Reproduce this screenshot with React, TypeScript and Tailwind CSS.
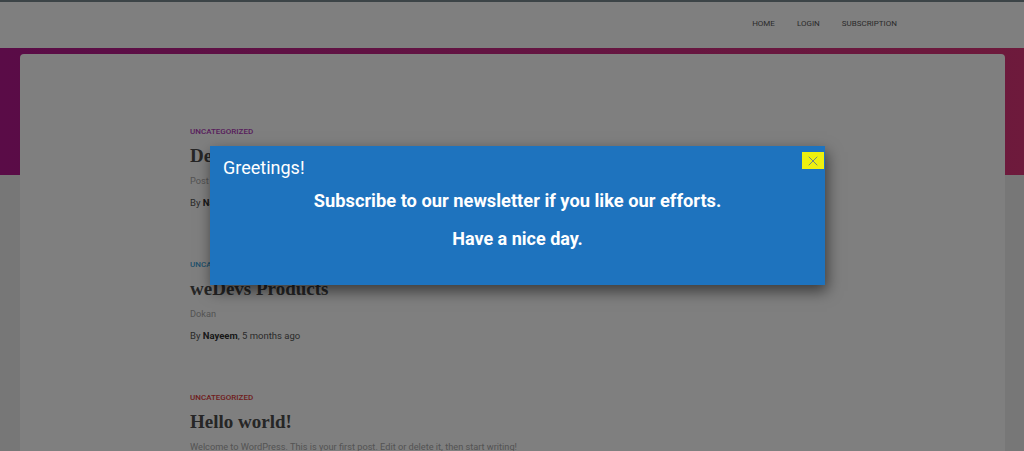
import { X } from "lucide-react";

const posts = [
  {
    cat: "Uncategorized",
    catColor: "text-[#b03cb8]",
    title: "Demo Subscription",
    excerpt: "Post content for demo",
    author: "Nayeem",
    when: "5 months ago",
  },
  {
    cat: "Uncategorized",
    catColor: "text-[#3ea2d8]",
    title: "weDevs Products",
    excerpt: "Dokan",
    author: "Nayeem",
    when: "5 months ago",
  },
  {
    cat: "Uncategorized",
    catColor: "text-[#e03c3c]",
    title: "Hello world!",
    excerpt:
      "Welcome to WordPress. This is your first post. Edit or delete it, then start writing!",
    author: "admin",
    when: "5 months ago",
  },
];

function App() {
  return (
    <div className="relative h-[451px] overflow-hidden bg-[#eeeeee] font-['Roboto',sans-serif]">
      {/* 헤더 */}
      <header className="h-[48px] bg-white border-t-[2px] border-[#78888f] flex items-center justify-end pr-[127px]">
        <nav className="flex gap-[22px] text-[8px] uppercase text-[#555555] -mt-[2px]">
          <span>Home</span>
          <span>Login</span>
          <span>Subscription</span>
        </nav>
      </header>

      {/* 그라데이션 배너 + 카드 */}
      <div className="h-[127px] bg-gradient-to-r from-[#b4188e] to-[#dc3478]" />
      <main className="-mt-[121px] mx-[20px] mr-[19px] bg-white rounded-[4px] h-[400px] pt-[73px] pl-[170px]">
        <div className="flex flex-col gap-[51px]">
          {posts.map((p) => (
            <article key={p.title} className="flex flex-col">
              <span className={`text-[8px] font-medium uppercase leading-[10px] ${p.catColor}`}>
                {p.cat}
              </span>
              <h2 className="mt-[8px] font-['Liberation_Serif',serif] font-bold text-[19px] leading-[22px] text-[#4c4c4c]">
                {p.title}
              </h2>
              <p className="mt-[8px] text-[9.2px] leading-[12px] text-[#a8a8a8]">{p.excerpt}</p>
              <p className="mt-[10px] text-[9.5px] leading-[12px] text-[#555555]">
                By <span className="font-bold text-[#333333]">{p.author}</span>, {p.when}
              </p>
            </article>
          ))}
        </div>
      </main>

      {/* 오버레이 */}
      <div className="absolute inset-0 bg-black/50" />

      {/* 모달 */}
      <div className="absolute left-[210px] top-[146px] w-[615px] h-[139px] bg-[#1e73be] text-white shadow-[2px_6px_14px_rgba(0,0,0,0.55)] pt-[11px] px-[13px]">
        <button className="absolute top-[6px] right-[1px] w-[22px] h-[17px] bg-[#eef00f] flex items-center justify-center">
          <X className="w-[16px] h-[16px] text-[#5a7a92]" strokeWidth={1.3} />
        </button>
        <h3 className="text-[18px] leading-[22px]">Greetings!</h3>
        <p className="mt-[11px] text-center font-bold text-[18.3px] leading-[22px]">
          Subscribe to our newsletter if you like our efforts.
        </p>
        <p className="mt-[16px] text-center font-bold text-[18px] leading-[22px]">
          Have a nice day.
        </p>
      </div>
    </div>
  );
}

export default App;
